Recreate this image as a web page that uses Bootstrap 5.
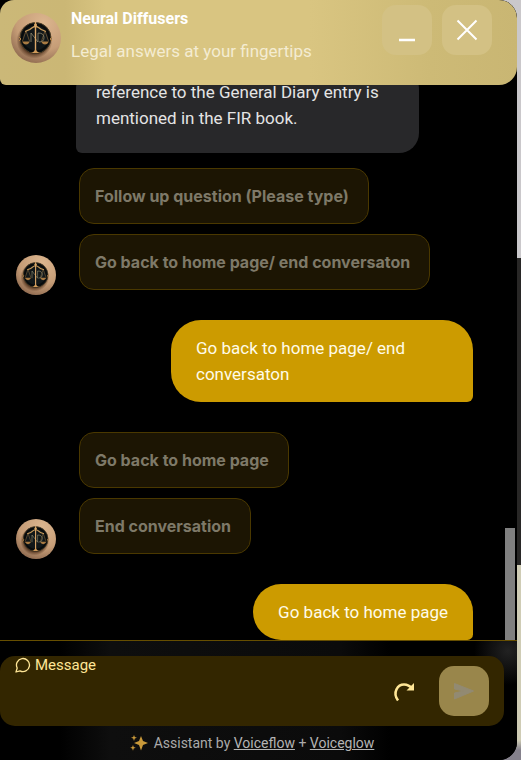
<!DOCTYPE html>
<html lang="en">
<head>
<meta charset="utf-8">
<meta name="viewport" content="width=device-width, initial-scale=1">
<title>Neural Diffusers</title>
<link href="https://cdn.jsdelivr.net/npm/bootstrap@5.3.0/dist/css/bootstrap.min.css" rel="stylesheet">
<style>
  body { font-family: "Roboto", sans-serif; font-size: 17px; line-height: 26px; color: #e4e4e4; background: linear-gradient(#cac8cb 0 258px, #282726 258px 565px, #cfccb5 565px 740px, #85818c 750px); }
  .chat-window { height: 100vh; margin-right: 4px; background: #000; border-radius: 0 18px 18px 0; }
  .chat-header { height: 85px; padding: 5px 25px 0 11px; border-radius: 14px 18px 18px 6px; background: linear-gradient(90deg, #cbb878 0, #cbb775 65px, #d9c581 105px, #d9c581 310px, #cdba76 430px, #c9b673 100%); }
  .logo-lg { width: 50px; height: 50px; margin-top: 8px; }
  .logo-sm { width: 40px; height: 40px; }
  .chat-names { margin-left: 10px; }
  .chat-title { font-size: 16px; line-height: 28px; color: #fff; }
  .chat-tagline { line-height: 36px; color: #f4ecd2; }
  .head-actions { gap: 10px; }
  .head-btn { width: 50px; height: 50px; border-radius: 14px; background: #d3c184; }
  .thread { min-height: 0; }
  .messages { padding-left: 16px; padding-right: 32px; }
  .bot-bubble { margin-left: 60px; padding: 10px 40px 22px 20px; background: #28282a; border-radius: 20px 20px 20px 6px; }
  .user-bubble { max-width: 302px; margin-top: 25px; padding: 15px 25px; color: #fffbe9; background: #cc9b00; border-radius: 30px 30px 6px 30px; }
  .choices { gap: 10px; margin-left: 23px; margin-bottom: 5px; }
  .choice-btn { padding: 15px 19px 15px 15px; font: 700 16px/24px "Inter", sans-serif; color: #7e7968; background: #1c1503; border: 1px solid #4a3800; border-radius: 15px; }
  .first-turn { margin-top: 15px; }
  .next-turn { margin-top: 30px; }
  .scroll-track { width: 12px; padding-right: 2px; }
  .scroll-thumb { height: 112px; background: #808080; }
  .chat-footer { padding: 15px 13px 7px 0; border-top: 1px solid #664e00; background: radial-gradient(circle at 508px 10px, #222 0, #0000 34px), linear-gradient(90deg, #000 60px, #0e0e0e 110px, #0b0b0b 340px, #000 390px); }
  .composer { height: 70px; padding: 0 15px; background: #332600; border-radius: 15px; }
  .composer-label { font-size: 15px; line-height: 18px; color: #ffe696; gap: 4px; }
  .composer textarea { height: 46px; resize: none; color: #ffe696; }
  .restart-btn { width: 30px; height: 30px; margin-right: 20px; }
  .send-btn { width: 50px; height: 50px; border-radius: 15px; background: #99864b; }
  .credits { font-size: 14px; line-height: 20px; margin-top: 7px; color: #aaa; gap: 6px; }
  .credits a { color: #b4b4b4; }
</style>
<script src="https://cdn.jsdelivr.net/npm/bootstrap@5.3.0/dist/js/bootstrap.bundle.min.js"></script>
</head>
<body>
<svg width="0" height="0" class="position-absolute" aria-hidden="true">
  <defs>
    <radialGradient id="skin" cx=".65" cy=".2" r=".9"><stop offset="0" stop-color="#dcb68f"/><stop offset=".6" stop-color="#c69d77"/><stop offset="1" stop-color="#87634a"/></radialGradient>
    <radialGradient id="shade"><stop offset=".75" stop-color="#4b2d19" stop-opacity=".8"/><stop offset="1" stop-color="#4b2d19" stop-opacity="0"/></radialGradient>
    <symbol id="logo" viewBox="0 0 50 50">
      <circle cx="25" cy="25" r="25" fill="url(#skin)"/>
      <circle cx="23.500" cy="27.500" r="18" fill="url(#shade)"/>
      <circle cx="24.500" cy="25" r="15.500" fill="#111719" stroke="#4a3a22"/>
      <circle cx="24.500" cy="25" r="13.500" fill="none" stroke="#080b0c" stroke-width="2"/>
      <g fill="none" stroke="#80623a" stroke-width=".7">
        <path d="M15 18l-3.500 10M15 18l3.500 10M34 18l-3.500 10M34 18l3.500 10"/>
        <path d="M20 29v-9l7 9v-9M27 20q6 0 6 4.500T28 29" stroke="#9d9678"/>
      </g>
      <path d="M11 28.500h8q-1.500 3-4 3t-4-3M30 28.500h8q-1.500 3-4 3t-4-3" fill="#a87a42"/>
      <path d="M14 18.500q5-1.500 7.500-4 3-2 6 0 2.500 2.500 7.500 4" fill="none" stroke="#c99b5c" stroke-width="1.300"/>
      <path d="M24.500 9v29" stroke="#dca869" stroke-width="1.400"/>
      <path d="M20 40q4-1 4.500-5 .5 4 4.500 5z" fill="#d09b5b"/>
      <circle cx="24.500" cy="12" r="1.500" fill="#dba968"/>
      <path d="M8 24l2 2-2 2M41 24l-2 2 2 2" fill="none" stroke="#b78548"/>
    </symbol>
  </defs>
</svg>
<main class="chat-window d-flex flex-column overflow-hidden">
  <header class="chat-header d-flex align-items-start flex-shrink-0">
    <svg class="logo-lg flex-shrink-0" role="img" aria-label="Logo"><use href="#logo"/></svg>
    <div class="chat-names flex-grow-1 text-nowrap">
      <h1 class="chat-title fw-bold m-0">Neural Diffusers</h1>
      <p class="chat-tagline m-0">Legal answers at your fingertips</p>
    </div>
    <div class="head-actions d-flex">
      <button class="head-btn btn border-0 p-0" type="button" aria-label="Minimize"><svg width="50" height="50" viewBox="0 0 50 50"><path d="M17 35h16" stroke="#fff" stroke-width="2.500"/></svg></button>
      <button class="head-btn btn border-0 p-0" type="button" aria-label="Close"><svg width="50" height="50" viewBox="0 0 50 50"><path d="M15.500 15.500l19 19m0-19l-19 19" stroke="#fff" stroke-width="2"/></svg></button>
    </div>
  </header>

  <section class="thread d-flex flex-grow-1 overflow-hidden">
    <div class="messages d-flex flex-column justify-content-end flex-grow-1">
      <p class="bot-bubble align-self-start mb-0 text-nowrap">reference to the General Diary entry is<br>mentioned in the FIR book.</p>
      <div class="first-turn d-flex align-items-end">
        <svg class="logo-sm flex-shrink-0" role="img" aria-label="Logo"><use href="#logo"/></svg>
        <div class="choices d-flex flex-column align-items-start">
          <button class="choice-btn btn" type="button">Follow up question (Please type)</button>
          <button class="choice-btn btn" type="button">Go back to home page/ end conversaton</button>
        </div>
      </div>
      <p class="user-bubble align-self-end mb-0">Go back to home page/ end conversaton</p>
      <div class="next-turn d-flex align-items-end">
        <svg class="logo-sm flex-shrink-0" role="img" aria-label="Logo"><use href="#logo"/></svg>
        <div class="choices d-flex flex-column align-items-start">
          <button class="choice-btn btn" type="button">Go back to home page</button>
          <button class="choice-btn btn" type="button">End conversation</button>
        </div>
      </div>
      <p class="user-bubble align-self-end mb-0">Go back to home page</p>
    </div>
    <div class="scroll-track d-flex align-items-end"><div class="scroll-thumb w-100"></div></div>
  </section>

  <footer class="chat-footer flex-shrink-0">
    <form class="composer d-flex align-items-center">
      <div class="flex-grow-1 align-self-start">
        <label class="composer-label d-flex align-items-center" for="message">
          <svg width="16" height="16" viewBox="0 0 16 16" fill="none" stroke="#ffe696" stroke-width="1.300" stroke-linejoin="round"><path d="M1 15l1.200-4A6.500 6.500 0 1 1 5 13.800z"/></svg>
          Message
        </label>
        <textarea id="message" class="form-control bg-transparent border-0 shadow-none p-0"></textarea>
      </div>
      <button class="restart-btn btn border-0 p-0 d-flex" type="button" aria-label="Restart"><svg width="30" height="30" viewBox="0 0 30 30"><path d="M9 24.500C3 16 9 8.500 15 8.500q5 0 8 4" fill="none" stroke="#ffe696" stroke-width="2.500"/><path d="M25 7v7.500h-7.500z" fill="#ffe696"/></svg></button>
      <button class="send-btn btn border-0 p-0" type="submit" aria-label="Send"><svg width="50" height="50" viewBox="0 0 50 50"><path d="M15.500 17.500L34.500 25l-19 8v-6l9.500-2-9.500-2z" fill="#928a72" stroke="#928a72" stroke-linejoin="round"/></svg></button>
    </form>
    <div class="credits d-flex justify-content-center align-items-center">
      <svg width="18" height="18" viewBox="0 0 18 18" fill="#c9993a"><path d="M11 2l2 5 5 2-5 2-2 5.500L9 11 4 9l5-2zM4 1l.8 2L7 3.800l-2.200.8L4 7l-.8-2.400L1 3.800 3.200 3zM3 11l.7 2 2 .7-2 .8-.7 2.200-.8-2.200-2-.8 2-.7z"/></svg>
      <span>Assistant by <a href="#">Voiceflow</a> + <a href="#">Voiceglow</a></span>
    </div>
  </footer>
</main>
</body>
</html>
